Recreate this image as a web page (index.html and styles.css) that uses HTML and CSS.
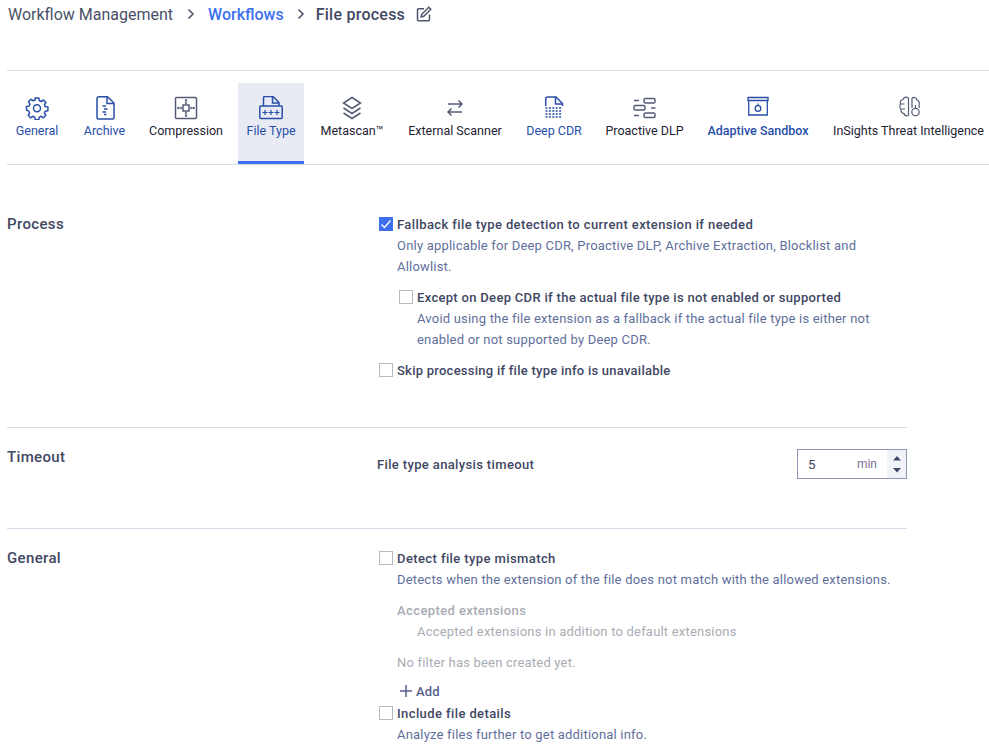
FILE: index.html
```html
<!DOCTYPE html>
<html lang="en">
<head>
<meta charset="utf-8">
<title>File process</title>
<link rel="stylesheet" href="styles.css">
</head>
<body>
<nav class="crumbs">
  <span class="crumb-root">Workflow Management</span>
  <svg class="chev chev-a" width="8" height="12" viewBox="0 0 8 12"><path d="M1.5 1.5 6 6l-4.500 4.500" fill="none" stroke="#4a5068" stroke-width="1.500"/></svg>
  <span class="crumb-link">Workflows</span>
  <svg class="chev chev-b" width="8" height="12" viewBox="0 0 8 12"><path d="M1.5 1.5 6 6l-4.500 4.500" fill="none" stroke="#4a5068" stroke-width="1.500"/></svg>
  <span class="crumb-current">File process</span>
  <svg class="edit" width="16" height="16" viewBox="0 0 16 16" fill="none" stroke="#4f566e" stroke-width="1.500"><path d="M8 2.700H2.500a1 1 0 0 0-1 1v10a1 1 0 0 0 1 1h10a1 1 0 0 0 1-1V8.500"/><path d="M5.800 8.300 12.800 1.300l2 2-7 7-2.600.600z"/></svg>
</nav>
<div class="tabs-wrap">
  <div class="tabs">
    <a class="tab blue t-general">
      <svg width="24" height="24" viewBox="0 0 24 24" fill="none" stroke="currentColor" stroke-width="1.500"><path d="M10.200 2h3.600l.5 2.700 1.800.8 2.300-1.500 2.500 2.500-1.500 2.300.8 1.800 2.700.5v3.600l-2.700.5-.8 1.800 1.500 2.300-2.500 2.500-2.300-1.500-1.800.8-.5 2.700h-3.600l-.5-2.700-1.800-.8-2.300 1.500-2.500-2.500 1.500-2.300-.8-1.800L1.500 14v-3.600l2.700-.5.8-1.800-1.500-2.300 2.500-2.500 2.300 1.500 1.800-.8z" stroke-linejoin="round"/><circle cx="12" cy="12.200" r="3.500"/></svg>
      <span>General</span>
    </a>
    <a class="tab blue t-archive">
      <svg width="24" height="24" viewBox="0 0 24 24" fill="none" stroke="currentColor" stroke-width="1.500"><path d="M6 .8h8.500L21 7v14.500a1.500 1.500 0 0 1-1.500 1.500h-13.500A1.500 1.500 0 0 1 4 21.500V2.800A2 2 0 0 1 6 .8z"/><path d="M14 1v6.500h7"/><path d="M9.500 10h3.500M11 13h3.500M9.500 16h3.500M11 18.500h2.500" stroke-width="1.300"/></svg>
      <span>Archive</span>
    </a>
    <a class="tab slate t-comp">
      <svg width="24" height="24" viewBox="0 0 24 24" fill="none" stroke="currentColor"><rect x="1.500" y="1.500" width="21" height="21" rx="1" stroke-width="1.500"/><rect x="9" y="9" width="6" height="6" stroke-width="1.500"/><path d="M12 3v4M12 17v4M3 12h4M17 12h4" stroke-width="1"/><path d="M10.500 5 12 3l1.500 2zM10.500 19l1.500 2 1.500-2zM5 10.500 3 12l2 1.500zM19 10.500l2 1.500-2 1.500zM10.500 6.500 12 8.500l1.500-2zM10.500 17.500l1.500-2 1.500 2zM6.500 10.500l2 1.500-2 1.500zM17.500 10.500l-2 1.500 2 1.500z" fill="currentColor" stroke="none"/></svg>
      <span class="black">Compression</span>
    </a>
    <a class="tab blue active t-ft">
      <svg width="24" height="24" viewBox="0 0.500 24 24" fill="none" stroke="currentColor" stroke-width="1.500"><path d="M4.500 10.500V2.500a1.500 1.500 0 0 1 1.500-1.500h8l6 6v3.500"/><path d="M13.500 1v6.500H20"/><rect x=".8" y="10.500" width="22.400" height="12.500" rx="1"/><path d="M3.500 17h5M6 14.500v5M9.500 17h5M12 14.500v5M15.500 17h5M18 14.500v5" stroke-width="1.200"/></svg>
      <span>File Type</span>
    </a>
    <a class="tab slate t-meta">
      <svg width="24" height="24" viewBox="0 0 24 24" fill="none" stroke="currentColor" stroke-width="1.500"><path d="M12 1.500l8.500 5.500L12 12.500 3.500 7z"/><path d="M3.500 12 12 17.500l8.500-5.500"/><path d="M3.500 17 12 22.500 20.500 17"/></svg>
      <span class="black">Metascan™</span>
    </a>
    <a class="tab slate t-ext">
      <svg width="24" height="24" viewBox="0 0 24 24" fill="none" stroke="currentColor" stroke-width="1.500"><path d="M5 8H19M15.500 4.500 19 8l-3.500 3.500"/><path d="M19 16H5M8.500 12.500 5 16l3.500 3.500"/></svg>
      <span class="black">External Scanner</span>
    </a>
    <a class="tab blue t-cdr">
      <svg width="24" height="24" viewBox="0 0 24 24" fill="none" stroke="currentColor" stroke-width="1.500"><path d="M3.700 10V3a2 2 0 0 1 2-2h8.300l6.500 6.500V10"/><path d="M13.500 1v7h7"/><path d="M3.500 12h17M3.500 15h17M3.500 18h17M3.500 21h17" stroke-dasharray="2 1.400" stroke-width="1.300"/></svg>
      <span>Deep CDR</span>
    </a>
    <a class="tab slate t-dlp">
      <svg width="24" height="24" viewBox="0 0 24 24" fill="none" stroke="currentColor" stroke-width="1.500"><path d="M1 4.500h5M18 12h4.500M1 19.500h5"/><rect x="11" y="2.500" width="11" height="4.500" rx="1.500"/><rect x="1" y="9.500" width="11" height="4.500" rx="1.500"/><rect x="11" y="17" width="11" height="4.500" rx="1.500"/></svg>
      <span class="black">Proactive DLP</span>
    </a>
    <a class="tab blue strong t-sand">
      <svg width="24" height="24" viewBox="0 0 24 24" fill="none" stroke="currentColor" stroke-width="1.300"><path d="M2 1.500h20v3H2z"/><path d="M2.700 4.500V19h18.600V4.500"/><circle cx="12" cy="12.500" r="2.800"/><path d="M12 9.700V7.500"/></svg>
      <span>Adaptive Sandbox</span>
    </a>
    <a class="tab slate t-ins">
      <svg width="24" height="24" viewBox="0 0 24 24" fill="none" stroke="currentColor" stroke-width="1.200"><path d="M11.500 2v17.500M15 2v10"/><path d="M11.500 2C9 .3 6.500 1.500 6 3.500 4 4 3 6 3.500 8c-1 1.500-.8 4 .5 5-.5 2.500 1 4.500 3 4.500.5 2 2.500 3 4.500 2"/><path d="M15 2c2.500-1.500 4.500 0 5 2 2 .5 2.800 3 2 5 .5 1 .5 2 0 3"/><circle cx="18.500" cy="16" r="3.700"/><path d="M18.500 12.300V9M4 8h3.500M4.500 13h3.500"/></svg>
      <span class="black">InSights Threat Intelligence</span>
    </a>
  </div>
</div>
<main class="content">
  <section class="row row-process">
    <h2 class="row-title">Process</h2>
    <div class="row-body">
      <label class="check"><span class="box checked"><svg width="14" height="14" viewBox="0 0 14 14" fill="none" stroke="#fff" stroke-width="1.300"><path d="M2.500 7.500 5.500 10.500 11.500 3.500"/></svg></span><span class="check-label">Fallback file type detection to current extension if needed</span></label>
      <p class="hint">Only applicable for Deep CDR, Proactive DLP, Archive Extraction, Blocklist and Allowlist.</p>
      <div class="nested">
        <label class="check"><span class="box"></span><span class="check-label tight">Except on Deep CDR if the actual file type is not enabled or supported</span></label>
        <p class="hint">Avoid using the file extension as a fallback if the actual file type is either not enabled or not supported by Deep CDR.</p>
      </div>
      <label class="check skip"><span class="box"></span><span class="check-label tighter">Skip processing if file type info is unavailable</span></label>
    </div>
  </section>
  <section class="row row-timeout">
    <h2 class="row-title">Timeout</h2>
    <div class="timeout-body">
      <span class="timeout-label">File type analysis timeout</span>
      <div class="spin">
        <span class="spin-val">5</span><span class="spin-unit">min</span>
        <span class="spin-btns"><svg width="10" height="24" viewBox="0 0 10 24"><path d="M1 8.500 5 4 9 8.500zM1 16h8l-4 4.500z" fill="#3e4868"/></svg></span>
      </div>
    </div>
  </section>
  <section class="row row-general">
    <h2 class="row-title">General</h2>
    <div class="row-body">
      <label class="check"><span class="box"></span><span class="check-label">Detect file type mismatch</span></label>
      <p class="hint">Detects when the extension of the file does not match with the allowed extensions.</p>
      <div class="accepted">
        <div class="acc-title">Accepted extensions</div>
        <div class="acc-hint">Accepted extensions in addition to default extensions</div>
        <div class="acc-empty">No filter has been created yet.</div>
        <div class="acc-add"><svg width="14" height="14" viewBox="0 0 14 14" fill="none" stroke="#54608a" stroke-width="1.500"><path d="M7 1v12M1 7h12"/></svg><span>Add</span></div>
      </div>
      <label class="check"><span class="box"></span><span class="check-label">Include file details</span></label>
      <p class="hint">Analyze files further to get additional info.</p>
    </div>
  </section>
</main>
</body>
</html>
```
FILE: styles.css
```css
* { box-sizing: border-box; }
html, body { margin: 0; padding: 0; height: 755px; overflow: hidden; background: #fff; }
body { font-family: Roboto, "Noto Sans", sans-serif; font-size: 13px; color: #3f4763; }

.crumbs { display: flex; align-items: center; height: 28px; padding-left: 8px; font-size: 16px; }
.crumb-root { color: #4a5068; }
.chev-a { margin-left: 14px; }
.crumb-link { margin-left: 13px; color: #3d6ff0; font-weight: 500; }
.chev-b { margin-left: 13px; }
.crumb-current { margin-left: 11px; color: #3f4763; font-weight: 500; letter-spacing: .25px; }
.edit { margin-left: 11px; }

.tabs-wrap { margin: 42px 0 0 7px; border-top: 1px solid #d5dbe8; border-bottom: 1px solid #d5dbe8; height: 95px; overflow: hidden; }
.tabs { display: flex; gap: 8px; padding-top: 12px; height: 93px; }
.tab { display: flex; flex: none; flex-direction: column; align-items: center; height: 81px; padding-top: 13px; white-space: nowrap; font-size: 12.500px; line-height: 16px; }
.tab svg { width: 24px; height: 24px; margin-bottom: 3px; flex: none; }
.blue { color: #284ea8; }
.strong { font-weight: 500; }
.slate { color: #545b75; }
.black { color: #1e2233; }
.active { background: #e8ebf4; border-bottom: 3px solid #3d6ff0; }
.t-general { width: 60px; }
.t-archive { width: 59px; }
.t-comp { width: 88px; }
.t-ft { width: 66px; }
.t-meta { width: 80px; }
.t-ext { width: 110px; }
.t-cdr { width: 72px; }
.t-dlp { width: 93px; }
.t-sand { width: 118px; }
.t-ins { width: 167px; }

.content { width: 900px; margin-left: 7px; }
.row { display: flex; border-bottom: 1px solid #d5dbe8; }
.row-title { width: 372px; margin: 0; font-size: 15px; font-weight: 500; line-height: 20px; color: #3f4763; flex: none; letter-spacing: .35px; }
.row-process { height: 263px; padding-top: 49px; }
.row-timeout { height: 101px; padding-top: 19px; }
.row-general { padding-top: 19px; border-bottom: 0; }
.row-body { width: 528px; }
.check { display: flex; align-items: center; height: 20px; }
.box { width: 14px; height: 14px; border: 1px solid #b6b9c2; margin-right: 4px; display: flex; flex: none; background: #fff; }
.box.checked { background: #3d6ff0; border-color: #3d6ff0; }
.box.checked svg { margin: -1px; }
.check-label { font-weight: 500; color: #3f4763; letter-spacing: .4px; }
.check-label.tight { letter-spacing: .31px; }
.check-label.tighter { letter-spacing: .25px; }
.hint { margin: 0; padding: 1px 0 0 18px; font-size: 13px; line-height: 21px; color: #5f6f9c; letter-spacing: .2px; }
.nested { margin: 10px 0 0 20px; }
.skip { margin-top: 10px; }
.timeout-body { display: flex; justify-content: space-between; align-items: flex-start; width: 530px; margin-left: -2px; padding-top: 8px; }
.timeout-label { font-weight: 500; line-height: 16px; margin-top: 2px; letter-spacing: .36px; }
.spin { display: flex; align-items: center; width: 110px; height: 30px; margin-top: -6px; border: 1px solid #8d95b8; }
.spin-val { padding-left: 10px; width: 50px; font-size: 13.500px; color: #3f4763; }
.spin-unit { width: 39px; text-align: right; padding-right: 10px; font-size: 12px; color: #7a6f8c; }
.spin-btns { width: 19px; height: 28px; margin-left: auto; display: flex; align-items: center; justify-content: center; background: #f1f3f8; }
.spin-btns svg { display: block; }
.accepted { padding-left: 18px; color: #a9acb4; letter-spacing: .2px; }
.acc-title { font-weight: 500; margin-top: 11px; line-height: 20px; letter-spacing: .4px; }
.acc-hint { padding-left: 20px; line-height: 21px; }
.acc-empty { margin-top: 10px; line-height: 21px; }
.acc-add { display: flex; align-items: center; gap: 3px; margin: 8px 0 2px; height: 20px; color: #54608a; font-weight: 500; padding-left: 2px; }
```
